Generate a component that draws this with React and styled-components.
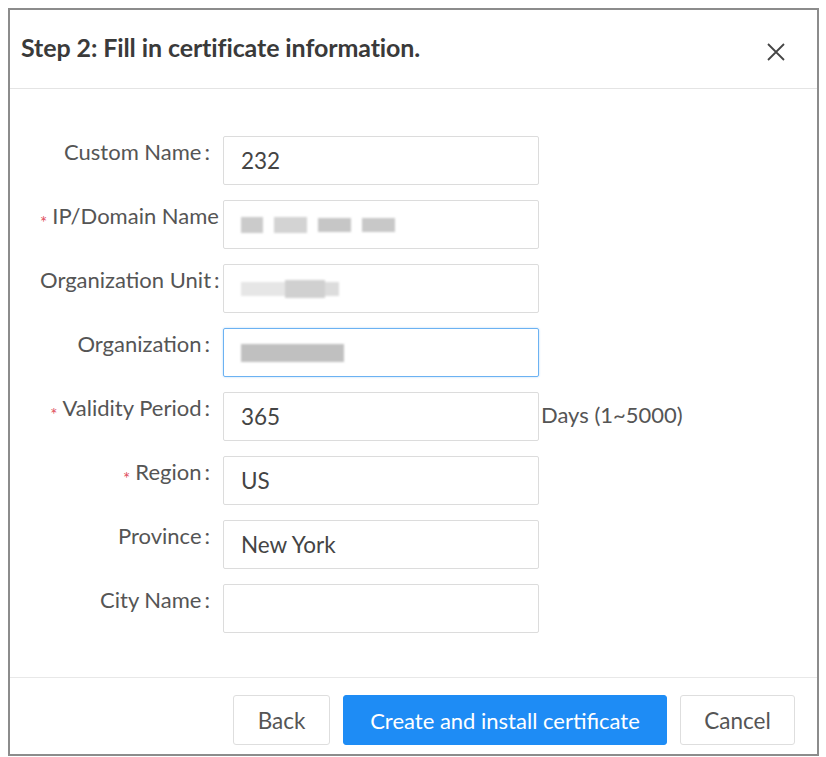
import React from 'react'
import styled, { createGlobalStyle, css } from 'styled-components'

const GlobalStyle = createGlobalStyle`
  html, body {
    margin: 0;
    padding: 0;
    background: #ffffff;
  }
  body {
    font-family: Lato, "Open Sans", "Liberation Sans", sans-serif;
    color: #555;
  }
`

const Page = styled.div`
  padding: 8px 7px 0 8px;
`

const Dialog = styled.div`
  width: 811px;
  box-sizing: border-box;
  border: 2px solid #8c8c8c;
  background: #fff;
  display: flex;
  flex-direction: column;
`

const Header = styled.div`
  height: 78px;
  display: flex;
  align-items: center;
  justify-content: space-between;
  padding: 0 31px 0 11px;
  border-bottom: 1px solid #e4e4e4;
`

const Title = styled.h2`
  margin: -4px 0 0;
  font-size: 25px;
  font-weight: 700;
  color: #3a3a3a;
  letter-spacing: -0.1px;
`

const Close = styled.button`
  border: 0;
  background: none;
  padding: 0;
  margin-top: 6px;
  display: flex;
  cursor: pointer;
`

const Body = styled.div`
  padding: 47px 0 44px;
  display: flex;
  flex-direction: column;
  gap: 15px;
`

const Row = styled.div`
  display: flex;
  align-items: flex-start;
`

const Label = styled.label`
  box-sizing: border-box;
  margin-left: 30px;
  width: 170px;
  margin-right: 13px;
  padding-top: 3px;
  line-height: 26px;
  font-size: 22px;
  color: #555;
  text-align: right;
  white-space: nowrap;
  ${p => p.colon && css`
    &::after {
      content: ':';
      margin-left: 3px;
    }
  `}
`

const Star = styled.span`
  display: inline-block;
  color: #e0505e;
  font-size: 17px;
  margin-right: 5px;
  position: relative;
  top: 5px;
  vertical-align: middle;
`

const Field = styled.div`
  box-sizing: border-box;
  width: 316px;
  height: 49px;
  border: 1px solid ${p => (p.focus ? '#6cb2f2' : '#dcdcdc')};
  border-radius: 2px;
  box-shadow: ${p => (p.focus ? '0 0 2px rgba(64,150,240,0.45)' : 'none')};
  padding-left: 17px;
  display: flex;
  align-items: center;
  font-size: 22.5px;
  color: #444;
`

const Suffix = styled.span`
  margin-left: 2px;
  line-height: 46px;
  font-size: 22px;
  color: #555;
`

const Blur = styled.div`
  display: flex;
  align-items: center;
  gap: ${p => p.gap}px;
  filter: blur(1.3px);
`

const Chunk = styled.span`
  display: block;
  height: ${p => p.h}px;
  background: ${p => p.c};
`

const Footer = styled.div`
  border-top: 1px solid #e8e8e8;
  padding: 17px 22px 9px 0;
  display: flex;
  justify-content: flex-end;
  gap: 13px;
`

const Button = styled.button`
  height: 50px;
  box-sizing: border-box;
  padding: 0;
  border-radius: 3px;
  font-family: Lato, "Open Sans", "Liberation Sans", sans-serif;
  font-size: 22.5px;
  cursor: pointer;
  ${p => p.primary ? css`
    border: 1px solid #1e8cf5;
    background: #1e8cf5;
    color: #fff;
    font-size: 22px;
  ` : css`
    border: 1px solid #dedede;
    background: #fff;
    color: #555;
  `}
  width: ${p => p.w}px;
`

const CloseIcon = () => (
  <svg width="20" height="20" viewBox="0 0 20 20">
    <path d="M2 2 L18 18 M18 2 L2 18" stroke="#454545" strokeWidth="1.8" fill="none" />
  </svg>
)

const masked = {
  ip: { gap: 11, parts: [[22, 16, '#cbcbcb'], [33, 16, '#d3d3d3'], [33, 14, '#c6c6c6'], [33, 14, '#c8c8c8']] },
  unit: { gap: 0, parts: [[44, 14, '#e6e6e6'], [40, 18, '#d0d0d0'], [14, 14, '#dcdcdc']] },
  org: { gap: 0, parts: [[103, 18, '#c0c0c0']] },
}

const Masked = ({ kind }) => {
  const m = masked[kind]
  return (
    <Blur gap={m.gap}>
      {m.parts.map(([w, h, c], i) => (
        <Chunk key={i} h={h} c={c} style={{ width: w }} />
      ))}
    </Blur>
  )
}

const fields = [
  { label: 'Custom Name', colon: true, value: '232' },
  { label: 'IP/Domain Name', required: true, mask: 'ip' },
  { label: 'Organization Unit', colon: true, mask: 'unit' },
  { label: 'Organization', colon: true, mask: 'org', focus: true },
  { label: 'Validity Period', colon: true, required: true, value: '365', suffix: 'Days (1~5000)' },
  { label: 'Region', colon: true, required: true, value: 'US' },
  { label: 'Province', colon: true, value: 'New York' },
  { label: 'City Name', colon: true, value: '' },
]

export default function App() {
  return (
    <Page>
      <GlobalStyle />
      <Dialog>
        <Header>
          <Title>Step 2: Fill in certificate information.</Title>
          <Close aria-label="close"><CloseIcon /></Close>
        </Header>
        <Body>
          {fields.map(f => (
            <Row key={f.label}>
              <Label colon={f.colon}>
                {f.required && <Star>*</Star>}
                {f.label}
              </Label>
              <Field focus={f.focus}>
                {f.mask ? <Masked kind={f.mask} /> : f.value}
              </Field>
              {f.suffix && <Suffix>{f.suffix}</Suffix>}
            </Row>
          ))}
        </Body>
        <Footer>
          <Button w={97}>Back</Button>
          <Button primary w={324}>Create and install certificate</Button>
          <Button w={115}>Cancel</Button>
        </Footer>
      </Dialog>
    </Page>
  )
}
